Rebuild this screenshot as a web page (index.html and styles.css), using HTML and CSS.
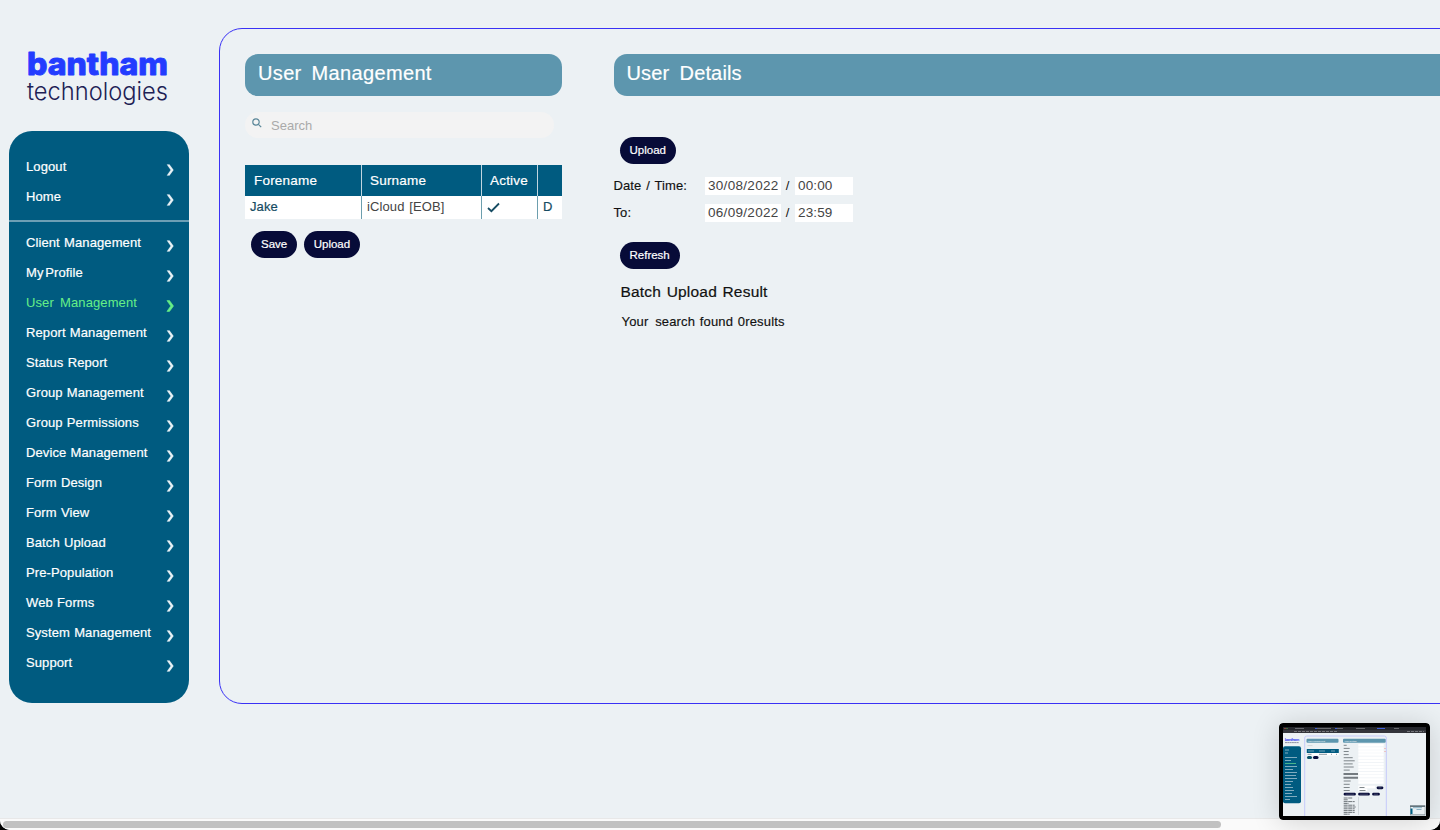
FILE: index.html
```html
<!DOCTYPE html>
<html lang="en">
<head>
<meta charset="utf-8">
<title>User Management</title>
<link rel="stylesheet" href="styles.css">
</head>
<body>
<svg class="defs" width="0" height="0"><defs>
<symbol id="chev" viewBox="0 0 8 12"><path d="M.9 .6H3.500L7.500 6L3.500 11.400H.9L4.700 6Z"/></symbol>
</defs></svg>
<div class="window">
<div class="page">
  <aside class="side">
    <svg class="logo" viewBox="0 0 148 60" width="148" height="60">
      <text class="logo-top" x="3" y="29.500" textLength="141" lengthAdjust="spacingAndGlyphs">bantham</text>
      <text class="logo-sub" x="3" y="54.500" textLength="141" lengthAdjust="spacingAndGlyphs">technologies</text>
    </svg>
    <nav class="nav">
      <div class="group top">
        <a>Logout<svg><use href="#chev"/></svg></a>
        <a>Home<svg><use href="#chev"/></svg></a>
      </div>
      <div class="group">
        <a>Client Management<svg><use href="#chev"/></svg></a>
        <a class="tight">My Profile<svg><use href="#chev"/></svg></a>
        <a class="active">User Management<svg><use href="#chev"/></svg></a>
        <a>Report Management<svg><use href="#chev"/></svg></a>
        <a>Status Report<svg><use href="#chev"/></svg></a>
        <a>Group Management<svg><use href="#chev"/></svg></a>
        <a>Group Permissions<svg><use href="#chev"/></svg></a>
        <a>Device Management<svg><use href="#chev"/></svg></a>
        <a>Form Design<svg><use href="#chev"/></svg></a>
        <a>Form View<svg><use href="#chev"/></svg></a>
        <a>Batch Upload<svg><use href="#chev"/></svg></a>
        <a>Pre-Population<svg><use href="#chev"/></svg></a>
        <a>Web Forms<svg><use href="#chev"/></svg></a>
        <a>System Management<svg><use href="#chev"/></svg></a>
        <a>Support<svg><use href="#chev"/></svg></a>
      </div>
    </nav>
  </aside>
  <main class="panel">
    <section class="users">
      <h1>User Management</h1>
      <div class="search">
        <svg width="10" height="10" viewBox="0 0 10 10"><circle cx="4" cy="4" r="3.200"/><path d="M6.400 6.400L9.200 9.200"/></svg>
        <span>Search</span>
      </div>
      <div class="table">
        <div class="th">Forename</div><div class="th">Surname</div><div class="th">Active</div><div class="th"></div>
        <div class="td link">Jake</div><div class="td">iCloud [EOB]</div>
        <div class="td"><svg width="13" height="11" viewBox="0 0 13 11"><path d="M1 6L4.400 9.200L12 1.500"/></svg></div>
        <div class="td link">D</div>
      </div>
      <div class="buttons"><button>Save</button><button>Upload</button></div>
    </section>
    <section class="details">
      <h1>User Details</h1>
      <button class="upload">Upload</button>
      <div class="row"><label>Date / Time:</label><span class="field date">30/08/2022</span><i>/</i><span class="field time">00:00</span></div>
      <div class="row"><label>To:</label><span class="field date">06/09/2022</span><i>/</i><span class="field time">23:59</span></div>
      <button class="refresh">Refresh</button>
      <h2>Batch Upload Result</h2>
      <p><span class="wide">Your </span>search found 0results</p>
    </section>
  </main>
</div>
<div class="scroll"><div class="thumb"></div></div>
<svg class="preview" viewBox="1279 723 151 97" width="151" height="97">
  <rect x="1279" y="723" width="151" height="97" rx="4" fill="#000"/>
  <rect x="1283" y="727" width="143" height="89" fill="#ecf1f4"/>
  <rect x="1283" y="727" width="143" height="3" fill="#25262b"/>
  <rect x="1283" y="730" width="143" height="3" fill="#34353b"/>
  <path d="M1295 728.5h9M1315 728.5h16M1336 728.5h7M1356 728.5h9M1394 728.5h5" stroke="#85868a" stroke-width=".7"/>
  <path d="M1294 731.5h44M1407 731.5h17" stroke="#85868a" stroke-width=".8" stroke-dasharray="3 1"/>
  <path d="M1377 728.5h8M1315 728.5h2M1335 728.5h2" stroke="#3e5ed8"/>
  <path d="M1284.5 728.5h1" stroke="#e4574d"/><path d="M1286.5 728.5h1" stroke="#56b848"/>
  <path d="M1304.7 816V738a2 2 0 0 1 2-2h77.600a2 2 0 0 1 2 2v78" fill="none" stroke="#c5cafa"/>
  <text x="1284.700" y="741" class="tiny blue" textLength="14.500">bantham</text>
  <path d="M1285 742.600h14" stroke="#75788e" stroke-width=".8" stroke-dasharray="2 .3"/>
  <rect x="1283" y="746.300" width="18" height="57" rx="2" fill="#005b80"/>
  <path d="M1285 750h4M1285 753h3M1285 757.500h12M1285 760.500h6M1285 766.500h12M1285 769.500h8M1285 772.500h12M1285 775.500h11M1285 778.500h12M1285 781.500h8M1285 784.500h6M1285 787.500h8M1285 790.500h9M1285 793.500h7M1285 796.500h12M1285 799.500h5" stroke="#8eb5c6" stroke-width=".9"/>
  <path d="M1285 763.500h11" stroke="#4fbf8d" stroke-width=".9"/>
  <rect x="1306.500" y="738.700" width="32" height="4" rx="1" fill="#5d96ae"/>
  <rect x="1343" y="738.700" width="42.700" height="4" rx="1" fill="#5d96ae"/>
  <text x="1308" y="741.800" class="tiny head" textLength="17">User Management</text>
  <text x="1344.500" y="741.800" class="tiny head" textLength="12">User Details</text>
  <path d="M1307.500 745.600h5" stroke="#ccd1d4" stroke-width=".8"/>
  <rect x="1306.800" y="749" width="32" height="4" fill="#005b80"/>
  <path d="M1308 751h6M1319 751h6M1331 751h4" stroke="#8eb5c6" stroke-width=".8"/>
  <rect x="1306.800" y="753" width="32" height="2.500" fill="#fff"/>
  <path d="M1307.500 754.300h4M1319 754.300h8M1331 754.300h1M1336 754.300h1" stroke="#687b87" stroke-width=".8"/>
  <rect x="1307" y="756" width="5" height="3" rx="1.500" fill="#0a5268"/><rect x="1313" y="756" width="5.500" height="3" rx="1.500" fill="#090d3b"/>
  <path d="M1358.300 745.300h25.400M1358.300 748.400h25.400M1358.300 751.500h25.400M1358.300 754.600h25.400M1358.300 757.700h25.400M1358.300 760.800h25.400M1358.300 763.900h25.400M1358.300 767h25.400M1358.300 770.100h25.400M1358.300 773.200h25.400M1358.300 776.300h25.400M1358.300 779.400h25.400M1358.300 782.500h25.400M1358.300 787h17M1358.300 790h9" stroke="#fff" stroke-width="2.500"/>
  <path d="M1343.700 745.300h3M1343.700 748.400h6M1343.700 751.500h5M1343.700 754.600h5M1343.700 757.700h9M1343.700 760.800h11M1343.700 763.900h9M1343.700 767h10M1343.700 770.100h6M1343.700 781h7M1343.700 784.300h6M1343.700 787.500h6M1343.700 790.500h6M1359.500 787.500h5M1359.500 790.500h6" stroke="#72797e" stroke-width=".9"/>
  <path d="M1343.500 774h14.500M1343.500 777.700h14.500" stroke="#747b80" stroke-width="2"/>
  <path d="M1384.500 748.500h1M1384.500 751.500h1" stroke="#e99"/>
  <path d="M1378 787.800h4M1345 794.200h9.500M1359.500 794.200h9M1373.500 794.200h5" stroke="#090d3b" stroke-width="2.800" stroke-linecap="round"/>
  <path d="M1345.500 794.200h8.500M1360 794.200h8M1374 794.200h4M1378.500 787.800h3" stroke="#747890" stroke-width=".5"/>
  <path d="M1343.700 798h9M1343.700 799.800h4M1343.700 801.600h11M1343.700 803.400h5M1343.700 805.200h11M1343.700 807h12M1343.700 808.800h11M1343.700 810.600h11M1343.700 812.400h11M1343.700 814.200h6" stroke="#62696e" stroke-width=".9" stroke-dasharray="4 .5"/>
  <path d="M1358.500 797v18" stroke="#c6cdd1" stroke-width=".7"/>
  <rect x="1410" y="805.300" width="15.300" height="10" fill="#64747c"/><rect x="1410.500" y="807" width="14.300" height="7.500" fill="#e9eff2"/><rect x="1410.500" y="808.500" width="2" height="5.500" fill="#006084"/>
  <path d="M1413 807.700h9M1416.500 809.500h5" stroke="#6fa0b5" stroke-width=".8"/>
</svg>
</div>
</body>
</html>
```
FILE: styles.css
```css
* { box-sizing: border-box; }
html { background: #000; }
body { margin: 0; width: 1440px; height: 830px; overflow: hidden; background: #000; font: 13px/16px "Liberation Sans", Arial, sans-serif; letter-spacing: .12px; word-spacing: 1px; color: #111; }
.defs { position: absolute; }
.window { position: relative; width: 1440px; height: 830px; overflow: hidden; border-radius: 0 0 10px 10px; background: #ecf1f4; display: flex; flex-direction: column; }
.page { flex: 1; display: flex; align-items: flex-start; gap: 30px; padding: 28px 0 0 9px; min-height: 0; }
.side { flex: none; width: 180px; padding-top: 17px; }
.logo { display: block; margin: 0 0 26px 15px; overflow: visible; }
.logo-top { font: 800 31px "Inter", sans-serif; letter-spacing: 0; fill: #233cff; stroke: #233cff; stroke-width: .9px; stroke-linejoin: round; }
.logo-sub { font: 300 24px "Inter", sans-serif; letter-spacing: 0; fill: #1d2155; }
.nav { height: 572px; border-radius: 23px; background: #005b80; padding-top: 21px; color: #fff; }
.group.top { height: 70px; border-bottom: 2px solid #6d9fb5; }
.group + .group { padding-top: 6px; }
.nav a { display: flex; justify-content: space-between; align-items: center; height: 30px; padding: 0 15px 0 17px; letter-spacing: .1px; word-spacing: .5px; -webkit-text-stroke: .2px; }
.nav a svg { width: 8px; height: 12px; fill: #e8f1f5; stroke: #e8f1f5; stroke-width: .2px; margin-top: 5px; }
.nav a.tight { word-spacing: -2px; }
.nav a.active { color: #66ef87; word-spacing: 2.500px; -webkit-text-stroke: 0; }
.nav a.active svg { fill: #66ef87; stroke: #66ef87; stroke-width: .6px; }
.panel { flex: none; width: 1500px; height: 676px; border: 1px solid #3a32f5; border-radius: 23px; padding: 25px; display: flex; gap: 51.500px; }
.users { width: 317px; flex: none; }
.details { flex: 1; }
h1 { margin: 0; height: 41.500px; padding: 7px 13px; border-radius: 13px; background: #5d96ae; color: #fff; font-size: 20px; line-height: 24px; font-weight: 400; letter-spacing: .35px; word-spacing: 4px; -webkit-text-stroke: .2px; }
.details h1 { letter-spacing: .15px; word-spacing: 4.500px; }
.search { margin-top: 16.500px; width: 309px; height: 26px; border-radius: 13px; background: #f3f3f3; color: #aaa; display: flex; padding: 6px 7px; gap: 9px; letter-spacing: 0; }
.search svg { fill: none; stroke: #5b8799; stroke-width: 1.200; }
.table { margin-top: 27px; display: grid; grid-template-columns: 116px 120px 56px 25px; grid-template-rows: 31px 23px; }
.th { background: #005b80; color: #fff; font-size: 13.500px; letter-spacing: .2px; line-height: 31px; padding-left: 8px; border-left: 1px solid #c0d5df; -webkit-text-stroke: .2px; }
.td { background: #fff; color: #444; line-height: 22px; padding-left: 5px; border-left: 1px solid #6d9fae; }
.th:nth-child(4n+1), .td:nth-child(4n+1) { border-left: 0; }
.th:nth-child(1) { padding-left: 9px; }
.td.link { color: #164c63; -webkit-text-stroke: .2px; }
.td svg { display: block; margin-top: 6px; fill: none; stroke: #164c63; stroke-width: 1.800; }
button { display: block; border: 0; height: 27px; padding: 0 10px 1px; border-radius: 14px; background: #070b38; color: #fff; font: 11.500px/26px "Liberation Sans", Arial, sans-serif; letter-spacing: 0; -webkit-text-stroke: .2px; }
.buttons { display: flex; gap: 6.500px; margin: 12px 0 0 6px; }
.upload { margin: 41.500px 0 13px 6px; }
.row { display: flex; align-items: center; height: 18px; margin-bottom: 9px; }
.row label { width: 91px; }
.row i { width: 14px; text-align: center; font-style: normal; }
.field { height: 18px; background: #fff; color: #444; font-size: 13.500px; line-height: 18px; letter-spacing: .15px; padding: 0 3px 0 3.500px; overflow: hidden; overflow: clip; overflow-clip-margin: content-box; }
.date { width: 76px; letter-spacing: .3px; }
.time { width: 58px; }
.refresh { margin: 20px 0 13px 6px; }
h2 { margin: 0 0 12px 7px; font-size: 15.500px; line-height: 20px; font-weight: 400; letter-spacing: .2px; -webkit-text-stroke: .2px; }
p { margin: 0 0 0 8px; letter-spacing: .15px; }
p, label { -webkit-text-stroke: .15px; }
.wide { word-spacing: 3px; }
.scroll { height: 12px; background: #fafafa; border-top: 1px solid #e8e8e8; padding: 2px 3px; }
.thumb { width: 1218px; height: 7px; border-radius: 4px; background: #c1c1c1; }
.preview { position: absolute; left: 1279px; top: 723px; border-radius: 4px; box-shadow: 0 2px 28px rgba(0,0,0,.16); }
.tiny { font-family: "Liberation Sans", sans-serif; letter-spacing: 0; word-spacing: 0; }
.blue { font-size: 4px; font-weight: 700; fill: #3141f0; }
.head { font-size: 2.500px; fill: #e5f0f5; }
```
